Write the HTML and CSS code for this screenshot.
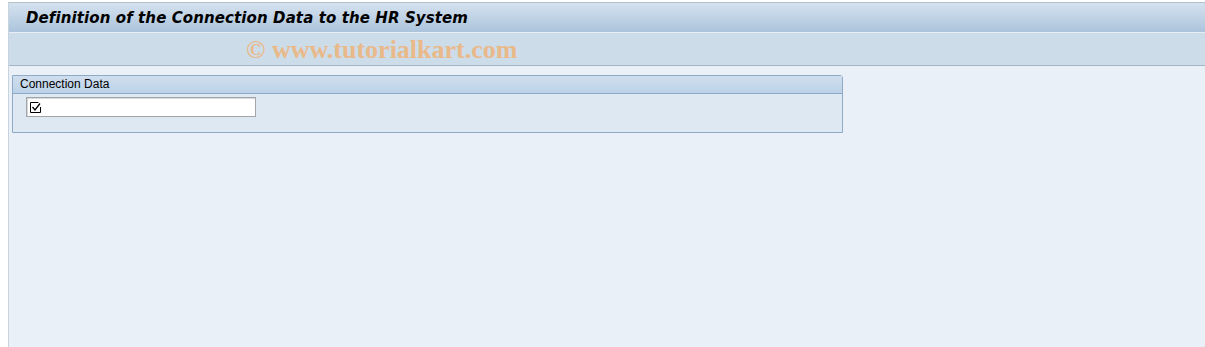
FILE: index.html
```html
<!DOCTYPE html>
<html>
<head>
<meta charset="utf-8">
<link rel="stylesheet" href="styles.css">
</head>
<body>
<div class="frame">
  <div class="titlebar"><span class="title">Definition of the Connection Data to the HR System</span></div>
  <div class="toolbar"><span class="watermark">© www.tutorialkart.com</span></div>
  <div class="content">
    <div class="group">
      <div class="group-head">Connection Data</div>
      <div class="group-body">
        <div class="field">
          <svg class="chk" width="11" height="11" viewBox="0 0 11 11">
            <path d="M0.5 0.5 H8.5 M0.5 0.5 V10.5 H10.5 V5" fill="none" stroke="#000" stroke-width="1"/>
            <path d="M2.5 5 L5 8 L10 1.5" fill="none" stroke="#000" stroke-width="1.3"/>
          </svg>
        </div>
      </div>
    </div>
  </div>
</div>
</body>
</html>
```
FILE: styles.css
```css
html, body {
  margin: 0;
  padding: 0;
  background: #ffffff;
  height: 100%;
}
body {
  padding: 2px 0 0 8px;
  box-sizing: border-box;
  overflow: hidden;
}
.frame {
  height: 345px;
  display: flex;
  flex-direction: column;
  border-left: 1px solid #c9d3de;
  border-top: 1px solid #b4bfca;
  background: #e9f0f7;
}
.titlebar {
  height: 29px;
  background: linear-gradient(#d5e2ef, #abc4dc);
  border-bottom: 1px solid #e8eef5;
  display: flex;
  align-items: center;
  padding-left: 17px;
}
.title {
  font-family: "DejaVu Sans", sans-serif;
  font-weight: bold;
  font-style: italic;
  font-size: 15px;
  color: #000;
  letter-spacing: 0.1px;
}
.toolbar {
  height: 32px;
  background: #cddce9;
  border-bottom: 1px solid #a3b4c6;
  display: flex;
  align-items: center;
  padding-left: 237px;
}
.watermark {
  font-family: "Liberation Serif", serif;
  font-weight: bold;
  font-size: 26px;
  color: #e9b98a;
  position: relative;
  top: 1px;
}
.content {
  flex: 1;
  padding: 9px 0 0 3px;
}
.group {
  width: 829px;
  border: 1px solid #8faac7;
  border-top-right-radius: 3px;
  background: #dde8f3;
}
.group-head {
  height: 17px;
  background: linear-gradient(#cfdeee, #bcd2e8);
  border-bottom: 1px solid #8faac7;
  font-family: "Liberation Sans", Arial, sans-serif;
  font-size: 12px;
  line-height: 17px;
  padding-left: 7px;
  color: #000;
}
.group-body {
  height: 38px;
  padding: 3px 0 0 13px;
  box-sizing: border-box;
}
.field {
  width: 225px;
  height: 18px;
  border: 1px solid #a2a5a9;
  box-shadow: inset 1px 1px 0 #d8d8d8;
  background: #fff;
  display: flex;
  align-items: center;
  padding-left: 3px;
  box-sizing: content-box;
}
.chk {
  display: block;
}
```
